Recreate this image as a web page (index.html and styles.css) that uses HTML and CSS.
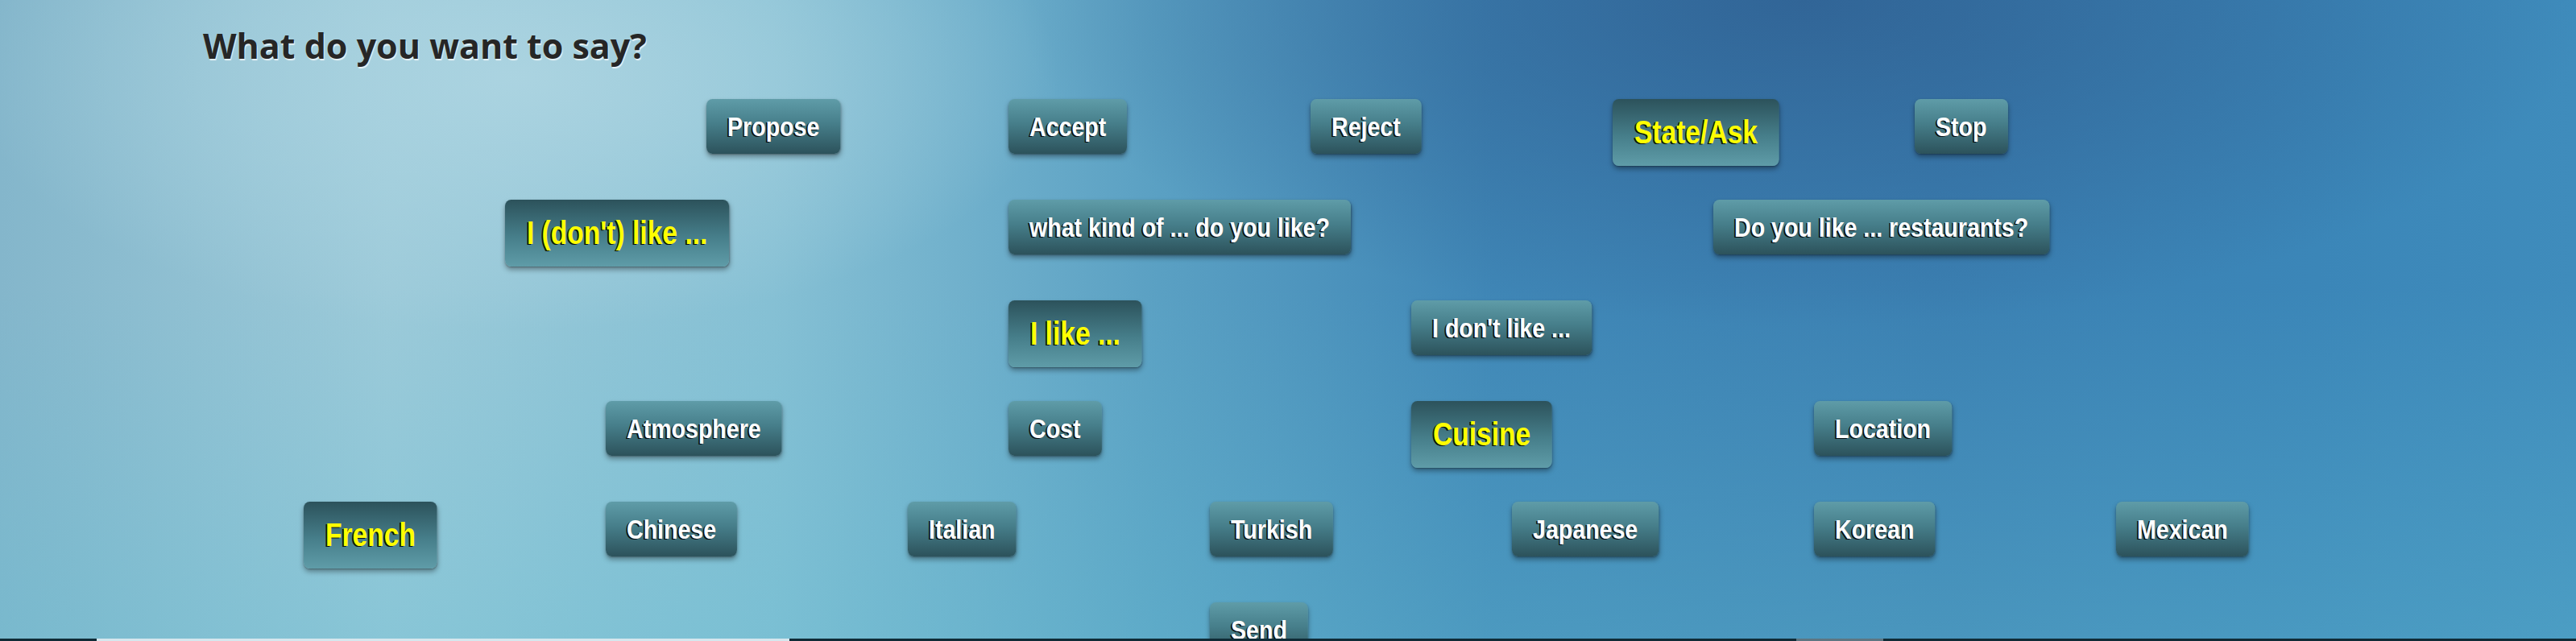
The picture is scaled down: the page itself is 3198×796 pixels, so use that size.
FILE: index.html
```html
<!DOCTYPE html>
<html lang="en">
<head>
<meta charset="utf-8">
<title>What do you want to say?</title>
<link rel="stylesheet" href="styles.css">
</head>
<body>
<div class="page">
  <header class="header">
    <h1 class="title">What do you want to say?</h1>
  </header>
  <main class="board">
    <button class="node r1 c7">Propose</button>
    <button class="node r1 c10">Accept</button>
    <button class="node r1 c13">Reject</button>
    <button class="node active r1 c16">State/Ask</button>
    <button class="node r1 c19">Stop</button>

    <button class="node active r2 c5">I (don't) like ...</button>
    <button class="node r2 c10">what kind of ... do you like?</button>
    <button class="node r2 c17">Do you like ... restaurants?</button>

    <button class="node active r3 c10">I like ...</button>
    <button class="node r3 c14">I don't like ...</button>

    <button class="node r4 c6">Atmosphere</button>
    <button class="node r4 c10">Cost</button>
    <button class="node active r4 c14">Cuisine</button>
    <button class="node r4 c18">Location</button>

    <button class="node active r5 c3">French</button>
    <button class="node r5 c6">Chinese</button>
    <button class="node r5 c9">Italian</button>
    <button class="node r5 c12">Turkish</button>
    <button class="node r5 c15">Japanese</button>
    <button class="node r5 c18">Korean</button>
    <button class="node r5 c21">Mexican</button>

    <button class="node r6 c12">Send</button>
  </main>
</div>
<div class="bottombar">
  <span class="seg dark s1"></span>
  <span class="seg light s2"></span>
  <span class="seg dark s3"></span>
  <span class="seg grey s4"></span>
  <span class="seg dark s5"></span>
</div>
</body>
</html>
```

FILE: styles.css
```css
html, body {
  margin: 0;
  padding: 0;
  height: 100%;
  overflow: hidden;
}

body {
  font-family: "Liberation Sans", Arial, sans-serif;
  background:
    radial-gradient(ellipse 900px 420px at 20% 12%, rgba(172, 212, 225, 0.95), rgba(172, 212, 225, 0) 75%),
    radial-gradient(ellipse 1300px 540px at 70% 0%, rgba(48, 98, 148, 0.9), rgba(48, 98, 148, 0) 75%),
    linear-gradient(to bottom, rgba(100, 190, 210, 0) 45%, rgba(100, 190, 210, 0.35) 100%),
    linear-gradient(to right, #84b6cb 0%, #9ccad9 15%, #86c0d4 30%, #5aa0c3 45%, #3f86b6 58%, #3b80b2 75%, #3b86b8 90%, #3f8cbc 100%);
}

.page {
  width: 3198px;
}

.header {
  height: 123px;
  box-sizing: border-box;
  padding: 27px 0 0 252px;
}

.title {
  margin: 0;
  font-family: "Open Sans", "Liberation Sans", sans-serif;
  font-weight: 700;
  font-size: 43px;
  line-height: normal;
  color: #262626;
  text-shadow: 1px 2px 1px rgba(255, 255, 255, 0.75);
}

.board {
  display: grid;
  grid-template-columns: repeat(24, 125px);
  grid-auto-rows: 125px;
  padding-left: 2px;
}

/* Arial Narrow look: the label is condensed horizontally */
.node {
  align-self: start;
  justify-self: start;
  white-space: nowrap;
  margin: 0;
  border: 0;
  border-radius: 9px / 8px;
  padding: 14px 31px;
  font-family: "Liberation Sans", Arial, sans-serif;
  font-weight: 700;
  font-size: 34px;
  line-height: 40px;
  color: #ffffff;
  text-shadow: -2px 1px 0 rgba(0, 0, 0, 0.9);
  background: linear-gradient(to bottom, #5f9ca8 0%, #467e8a 45%, #2c525b 100%);
  box-shadow: 0 4px 7px rgba(0, 0, 0, 0.35), 0 1px 2px rgba(0, 0, 0, 0.25);
  transform: scaleX(0.84);
  transform-origin: left top;
  cursor: pointer;
}

.node.active {
  padding: 18px 32px;
  font-size: 40px;
  line-height: 47px;
  color: #ffff00;
  background: linear-gradient(to bottom, #2c525b 0%, #467e8a 55%, #5f9ca8 100%);
}

.r1 { grid-row: 1; }
.r2 { grid-row: 2; }
.r3 { grid-row: 3; }
.r4 { grid-row: 4; }
.r5 { grid-row: 5; }
.r6 { grid-row: 6; }

.c3 { grid-column: 4; }
.c5 { grid-column: 6; }
.c6 { grid-column: 7; }
.c7 { grid-column: 8; }
.c9 { grid-column: 10; }
.c10 { grid-column: 11; }
.c12 { grid-column: 13; }
.c13 { grid-column: 14; }
.c14 { grid-column: 15; }
.c15 { grid-column: 16; }
.c16 { grid-column: 17; }
.c17 { grid-column: 18; }
.c18 { grid-column: 19; }
.c19 { grid-column: 20; }
.c21 { grid-column: 22; }

.bottombar {
  position: fixed;
  left: 0;
  right: 0;
  bottom: 0;
  height: 3px;
  display: flex;
}

.seg { height: 100%; }
.dark { background: #0f2b36; }
.light { background: #d6e7ee; }
.grey { background: #5d7682; }
.s1 { width: 120px; }
.s2 { width: 860px; }
.s3 { width: 1250px; }
.s4 { width: 108px; }
.s5 { flex: 1; }
```
